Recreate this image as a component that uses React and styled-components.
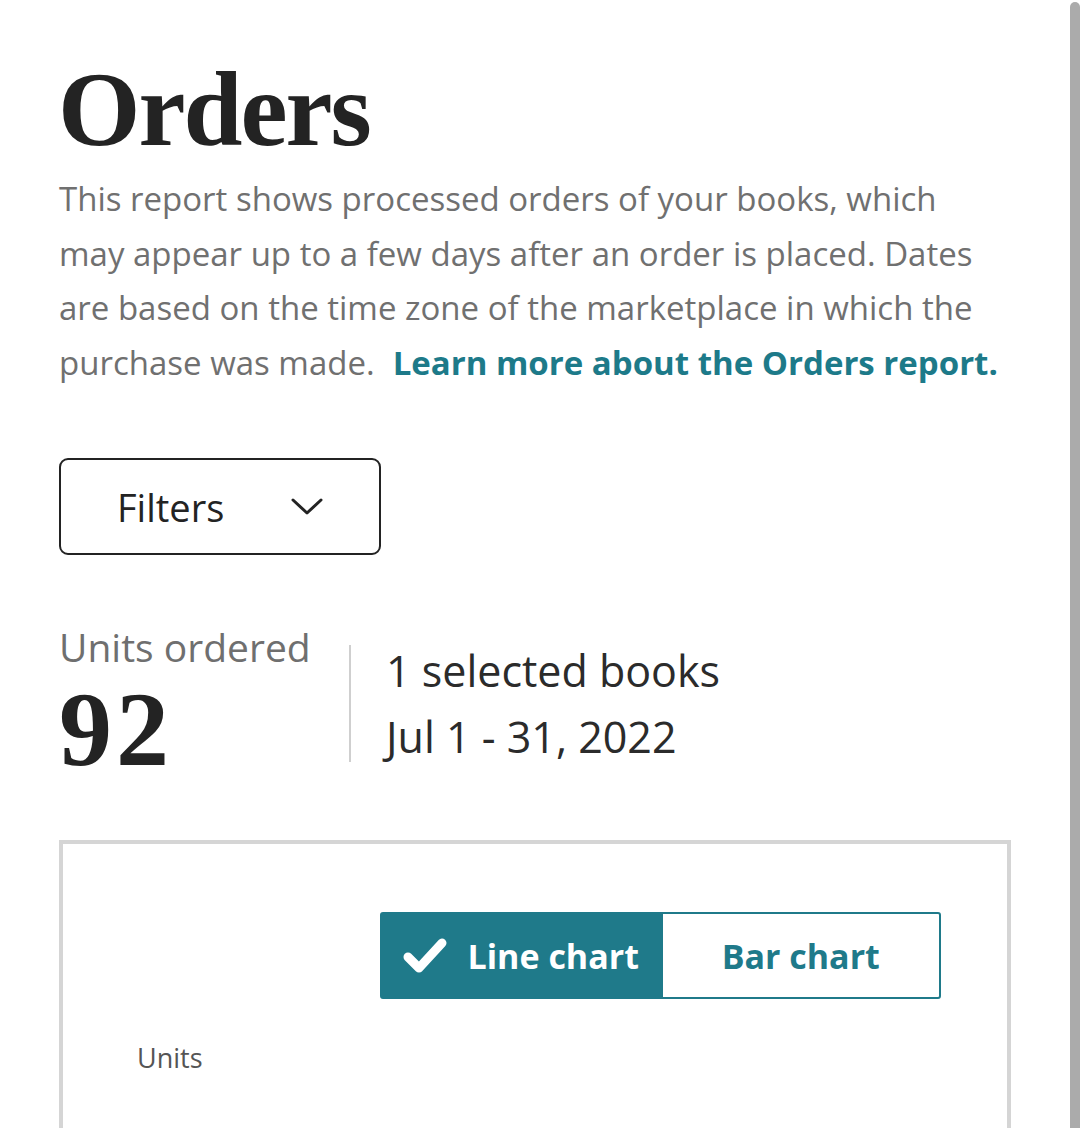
import React from "react";
import styled, { createGlobalStyle } from "styled-components";

const GlobalStyle = createGlobalStyle`
  html, body {
    margin: 0;
    padding: 0;
    background: #ffffff;
  }
  body {
    font-family: "Open Sans", "Noto Sans", Arial, sans-serif;
    color: #232323;
  }
`;

const Page = styled.div`
  display: flex;
  height: 1128px;
  overflow: hidden;
`;

const Main = styled.main`
  flex: 1;
  padding: 0 0 0 59px;
`;

const Content = styled.div`
  width: 952px;
`;

const ScrollTrack = styled.div`
  width: 10px;
  margin-top: 2px;
  background: #ababab;
  border-radius: 5px 5px 0 0;
`;

const Title = styled.h1`
  margin: 50px 0 0 -1px;
  font-family: "Liberation Serif", "Times New Roman", serif;
  font-weight: 700;
  font-size: 106px;
  line-height: 120px;
  letter-spacing: -2px;
  color: #232323;
`;

const Intro = styled.p`
  max-width: 945px;
  margin: 2px 0 0;
  font-size: 33px;
  line-height: 54.5px;
  color: #707070;
`;

const LearnLink = styled.a`
  margin-left: 18px;
  font-weight: 700;
  color: #1d7a89;
  text-decoration: none;
`;

const FilterButton = styled.button`
  display: flex;
  align-items: center;
  justify-content: space-between;
  box-sizing: border-box;
  width: 322px;
  height: 97px;
  margin-top: 68px;
  padding: 0 56px 0 56px;
  background: #fff;
  border: 2px solid #232323;
  border-radius: 9px;
  font-family: inherit;
  font-size: 38px;
  color: #232323;
`;

const Stats = styled.section`
  display: flex;
  align-items: flex-start;
  margin-top: 70px;
`;

const Metric = styled.div`
  display: flex;
  flex-direction: column;
  width: 290px;
`;

const MetricLabel = styled.span`
  font-size: 39px;
  line-height: 44px;
  color: #6f6f6f;
`;

const MetricValue = styled.span`
  margin-top: 6px;
  font-family: "Liberation Serif", "Times New Roman", serif;
  font-weight: 700;
  font-size: 106px;
  line-height: 110px;
  letter-spacing: 4px;
  color: #232323;
`;

const Divider = styled.div`
  width: 2px;
  height: 117px;
  margin-top: 20px;
  background: #cfcfcf;
`;

const Scope = styled.div`
  display: flex;
  flex-direction: column;
  gap: 8px;
  margin: 17px 0 0 35px;
  font-size: 43px;
  line-height: 58px;
  color: #2b2b2b;
`;

const ChartCard = styled.section`
  box-sizing: border-box;
  height: 300px;
  margin-top: 55px;
  border: 4px solid #d5d5d5;
  border-bottom: none;
  padding: 68px 0 0 74px;
`;

const Toggle = styled.div`
  display: flex;
  margin-left: 243px;
  width: 561px;
  height: 87px;
`;

const ToggleButton = styled.button`
  flex: 1;
  display: flex;
  align-items: center;
  justify-content: center;
  gap: 20px;
  box-sizing: border-box;
  font-family: inherit;
  font-weight: 700;
  font-size: 34px;
  border: 2px solid #1f7a8a;
  color: ${(p) => (p.$active ? "#ffffff" : "#1f7a8a")};
  background: ${(p) => (p.$active ? "#1f7a8a" : "#ffffff")};
  border-radius: ${(p) => (p.$active ? "3px 0 0 3px" : "0 3px 3px 0")};
`;

const AxisLabel = styled.div`
  margin-top: 40px;
  font-size: 27px;
  color: #555;
`;

const Chevron = () => (
  <svg width="32" height="18" viewBox="0 0 32 18" fill="none">
    <path d="M2 2 L16 15 L30 2" stroke="#232323" strokeWidth="3" strokeLinecap="round" strokeLinejoin="round" />
  </svg>
);

const Check = () => (
  <svg width="46" height="38" viewBox="0 0 46 38" fill="none">
    <path d="M6 20 L17 31 L40 6" stroke="#fff" strokeWidth="9" strokeLinecap="round" strokeLinejoin="round" />
  </svg>
);

export default function App() {
  return (
    <>
      <GlobalStyle />
      <Page>
        <Main>
          <Content>
            <Title>Orders</Title>
            <Intro>
              This report shows processed orders of your books, which may appear up to a few days after an order is placed. Dates are based on the time zone of the marketplace in which the purchase was made.
              <LearnLink href="#">Learn more about the Orders report.</LearnLink>
            </Intro>
            <FilterButton>
              Filters
              <Chevron />
            </FilterButton>
            <Stats>
              <Metric>
                <MetricLabel>Units ordered</MetricLabel>
                <MetricValue>92</MetricValue>
              </Metric>
              <Divider />
              <Scope>
                <span>1 selected books</span>
                <span>Jul 1 - 31, 2022</span>
              </Scope>
            </Stats>
            <ChartCard>
              <Toggle>
                <ToggleButton $active>
                  <Check />
                  Line chart
                </ToggleButton>
                <ToggleButton>Bar chart</ToggleButton>
              </Toggle>
              <AxisLabel>Units</AxisLabel>
            </ChartCard>
          </Content>
        </Main>
        <ScrollTrack />
      </Page>
    </>
  );
}
